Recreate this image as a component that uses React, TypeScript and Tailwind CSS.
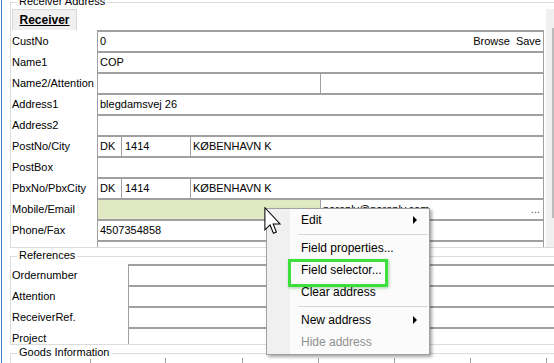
import type { ReactNode } from "react";

const grid = "border-[#a0a0a0]";

function ReceiverRow({ label, children }: { label: string; children?: ReactNode }) {
  return (
    <div className="flex h-[21px] shrink-0">
      <div className="flex w-[86px] items-center pl-[1px] pt-[2px]">{label}</div>
      <div className={"flex w-[447px] border-t-2 border-r border-l " + grid}>{children}</div>
    </div>
  );
}

function RefRow({ label }: { label: string }) {
  return (
    <div className="flex h-[21px] shrink-0">
      <div className="flex w-[117px] items-center pl-[1px] pt-[2px]">{label}</div>
      <div className={"flex-1 border-t-2 border-l " + grid} />
    </div>
  );
}

function Text({ children, className = "" }: { children?: ReactNode; className?: string }) {
  return <div className={"flex items-center pl-[2px] " + className}>{children}</div>;
}

function CityCells() {
  return (
    <>
      <Text className={"w-[24px] border-r " + grid}>DK</Text>
      <Text className={"w-[69px] border-r pl-[3px] " + grid}>1414</Text>
      <Text>KØBENHAVN K</Text>
    </>
  );
}

function Legend({ children }: { children: ReactNode }) {
  return (
    <span className="absolute top-[-8px] left-[6px] bg-white px-[2px] leading-[13px]">
      {children}
    </span>
  );
}

function MenuItem({ label, arrow, disabled }: { label: string; arrow?: boolean; disabled?: boolean }) {
  return (
    <div
      className={
        "flex h-[22px] items-center justify-between pr-[12px] pl-[34px] " +
        (disabled ? "text-[#8f8f8f]" : "text-black")
      }
    >
      <span>{label}</span>
      {arrow && (
        <span className="h-0 w-0 border-y-[4px] border-l-[4px] border-y-transparent border-l-black" />
      )}
    </div>
  );
}

function MenuSeparator() {
  return (
    <div className="flex h-[6px] items-center pr-[1px] pl-[31px]">
      <div className="h-px flex-1 bg-[#d7d7d7]" />
    </div>
  );
}

export default function App() {
  return (
    <div className="relative flex h-[363px] w-[554px] overflow-hidden bg-white font-['Liberation_Sans',Arial,sans-serif] text-[11px] leading-[13px] text-black">
      <div className="ml-[1px] w-[1px] shrink-0 bg-[#3d7cc2]" />

      <div className="flex flex-1 flex-col">
        {/* Receiver Address */}
        <div className="relative mt-[2px] ml-[8px] flex h-[246px] shrink-0 border-t border-b border-l border-[#dcdcdc]">
          <Legend>Receiver Address</Legend>
          <div className="flex w-[534px] flex-col overflow-hidden pt-[6px]">
            <div className="ml-[1px] flex h-[21px] w-[65px] shrink-0 items-center justify-center border-x border-t border-[#d9d9d9] bg-[#f0f0f0] text-[12px] font-bold underline">
              Receiver
            </div>
            <ReceiverRow label="CustNo">
              <Text className="flex-1 justify-between pr-[2px]">
                <span>0</span>
                <span>Browse&nbsp; Save</span>
              </Text>
            </ReceiverRow>
            <ReceiverRow label="Name1">
              <Text>COP</Text>
            </ReceiverRow>
            <ReceiverRow label="Name2/Attention">
              <div className={"w-[223px] border-r " + grid} />
            </ReceiverRow>
            <ReceiverRow label="Address1">
              <Text>blegdamsvej 26</Text>
            </ReceiverRow>
            <ReceiverRow label="Address2" />
            <ReceiverRow label="PostNo/City">
              <CityCells />
            </ReceiverRow>
            <ReceiverRow label="PostBox" />
            <ReceiverRow label="PbxNo/PbxCity">
              <CityCells />
            </ReceiverRow>
            <ReceiverRow label="Mobile/Email">
              <div className={"w-[223px] border-r bg-[#e1e9c3] " + grid} />
              <Text className="flex-1 justify-between pr-[3px]">
                <span>noreply@noreply.com</span>
                <span className="text-[#555]">...</span>
              </Text>
            </ReceiverRow>
            <ReceiverRow label="Phone/Fax">
              <Text>4507354858</Text>
            </ReceiverRow>
            <ReceiverRow label="" />
          </div>
          <div className="mt-[6px] ml-[1px] flex flex-1 bg-[#f0f0f0] pt-[19px] pb-[29px] pl-[6px]">
            <div className="flex-1 bg-[#bcbcbc]" />
          </div>
        </div>

        {/* References */}
        <div className="relative mt-[8px] ml-[8px] flex h-[89px] shrink-0 flex-col overflow-visible border-t border-b border-l border-[#dcdcdc]">
          <Legend>References</Legend>
          <div className="flex flex-col overflow-hidden pt-[7px]">
            <RefRow label="Ordernumber" />
            <RefRow label="Attention" />
            <RefRow label="ReceiverRef." />
            <RefRow label="Project" />
          </div>
        </div>

        {/* Goods Information */}
        <div className="relative mt-[8px] ml-[8px] flex flex-1 border-t border-l border-[#dcdcdc] pt-[4px]">
          <Legend>Goods Information</Legend>
          <div className={"w-[80px] border-r " + grid} />
          <div className={"w-[75px] border-r " + grid} />
          <div className={"w-[77px] border-r " + grid} />
          <div className={"w-[76px] border-r " + grid} />
          <div className={"w-[76px] border-r " + grid} />
          <div className={"w-[76px] border-r " + grid} />
          <div className={"w-[76px] border-r " + grid} />
        </div>
      </div>

      {/* context menu */}
      <div className="absolute top-[208px] left-[266px] flex h-[147px] w-[164px] border border-[#a0a0a0] bg-[#fbfbfb] text-[12px] leading-[14px] shadow-[2px_2px_3px_rgba(0,0,0,0.35)]">
        <div className="absolute inset-y-0 left-0 w-[23px] bg-[#f0f0f0]" />
        <div className="relative flex flex-1 flex-col">
          <MenuItem label="Edit" arrow />
          <MenuSeparator />
          <MenuItem label="Field properties..." />
          <MenuItem label="Field selector..." />
          <MenuItem label="Clear address" />
          <MenuSeparator />
          <MenuItem label="New address" arrow />
          <MenuItem label="Hide address" disabled />
        </div>
        <div className="absolute top-[50px] left-[21px] h-[28px] w-[100px] border-[3px] border-[#3ddf3d] shadow-[1px_1px_3px_rgba(0,120,0,0.35)]" />
      </div>

      {/* mouse pointer */}
      <svg className="absolute top-[207px] left-[264px]" width="18" height="28" viewBox="0 0 12 19">
        <path
          d="M0.5 0.5 L0.5 15.5 L4 12.2 L6.3 17.8 L8.3 17 L6.1 11.5 L10.8 11.5 Z"
          fill="#fff"
          stroke="#000"
          strokeWidth="0.7"
          strokeLinejoin="miter"
        />
      </svg>
    </div>
  );
}
